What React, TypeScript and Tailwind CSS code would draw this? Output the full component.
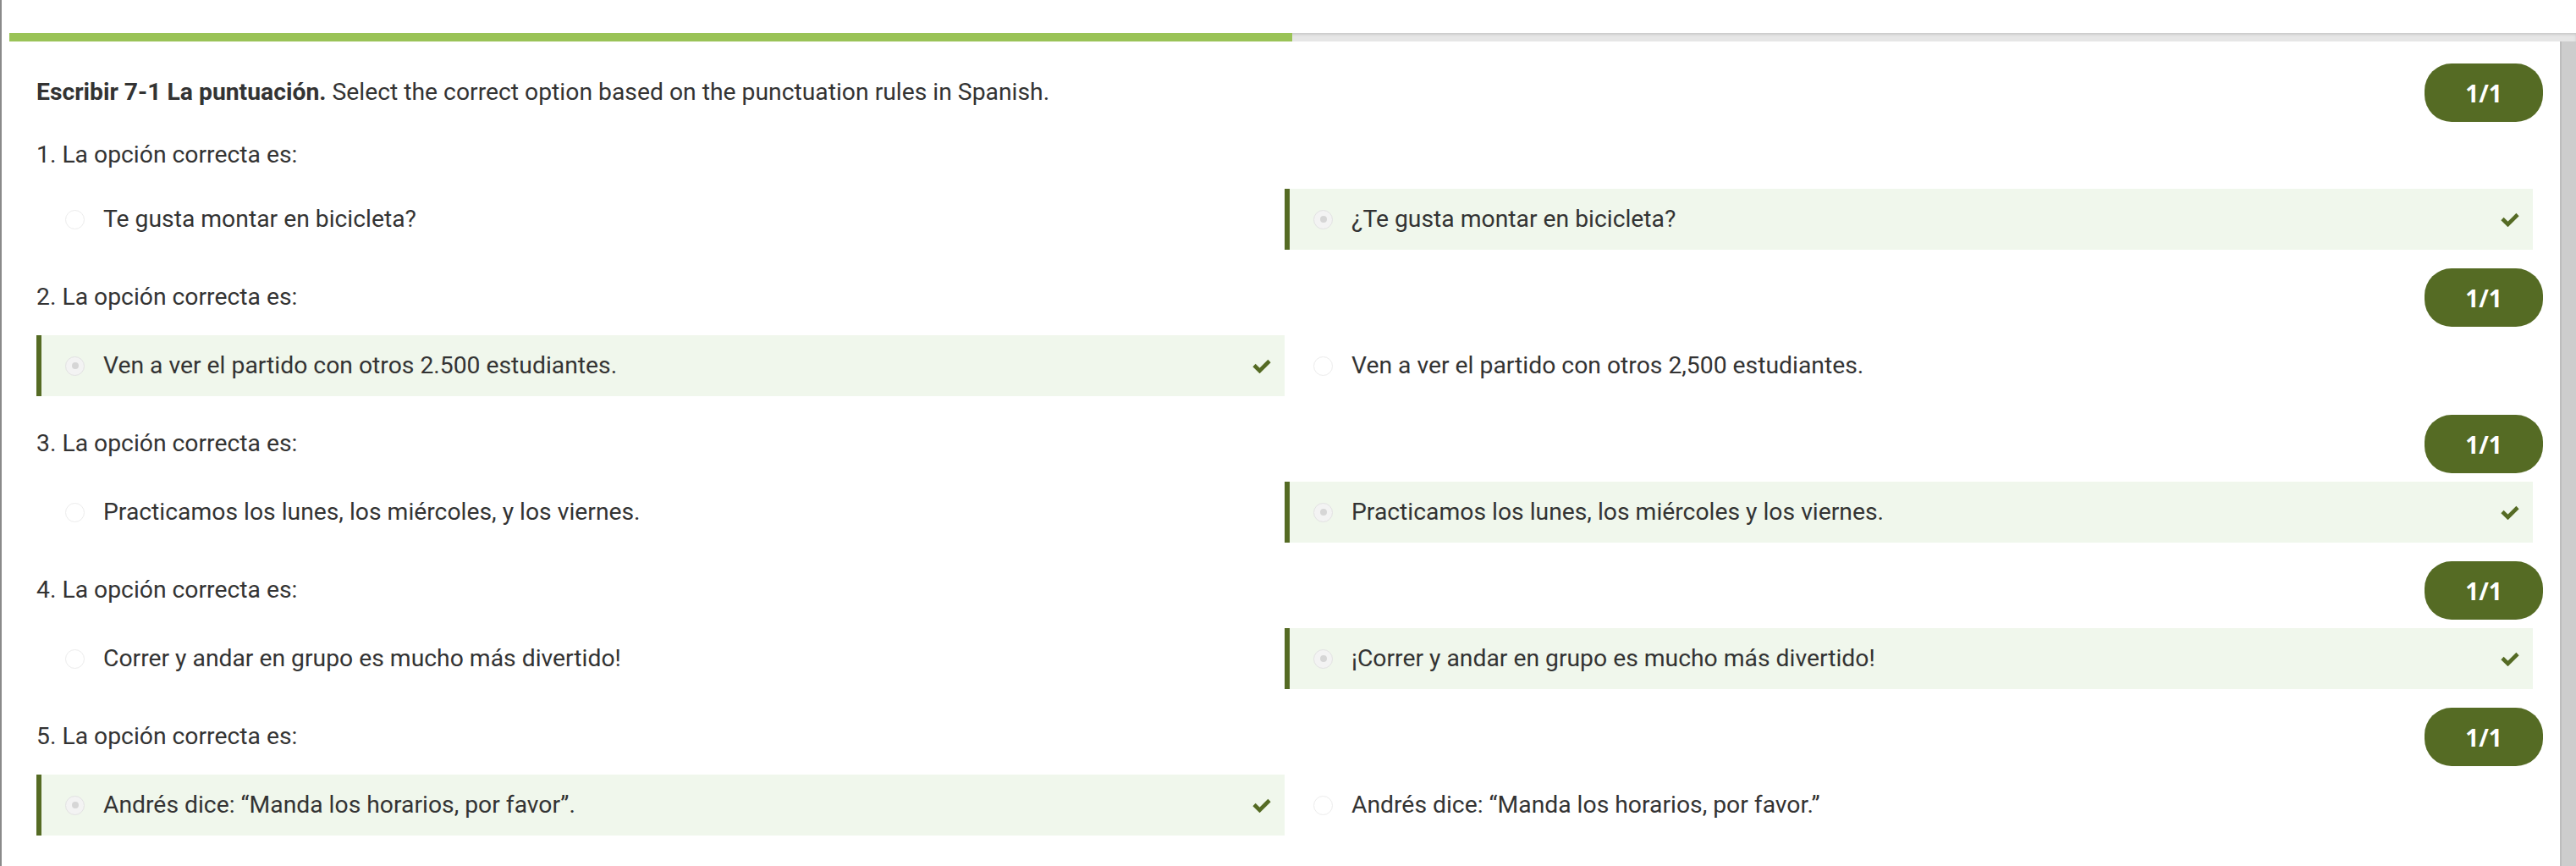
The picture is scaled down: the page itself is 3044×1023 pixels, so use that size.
import React from 'react';

interface Question {
  options: [string, string];
  correct: 0 | 1;
}

const questions: Question[] = [
  { options: ['Te gusta montar en bicicleta?', '¿Te gusta montar en bicicleta?'], correct: 1 },
  {
    options: [
      'Ven a ver el partido con otros 2.500 estudiantes.',
      'Ven a ver el partido con otros 2,500 estudiantes.',
    ],
    correct: 0,
  },
  {
    options: [
      'Practicamos los lunes, los miércoles, y los viernes.',
      'Practicamos los lunes, los miércoles y los viernes.',
    ],
    correct: 1,
  },
  {
    options: [
      'Correr y andar en grupo es mucho más divertido!',
      '¡Correr y andar en grupo es mucho más divertido!',
    ],
    correct: 1,
  },
  {
    options: ['Andrés dice: “Manda los horarios, por favor”.', 'Andrés dice: “Manda los horarios, por favor.”'],
    correct: 0,
  },
];

const Check = () => (
  <svg width="22" height="18" viewBox="0 0 22 18" className="shrink-0">
    <polyline points="2,8.5 8.5,15 20,3.5" fill="none" stroke="#556b24" strokeWidth="4.6" />
  </svg>
);

const Radio: React.FC<{ checked: boolean }> = ({ checked }) => (
  <div
    className={
      checked
        ? 'w-[23px] h-[23px] shrink-0 rounded-full border border-[#e2e2e2] bg-[#f3f3f3] flex items-center justify-center'
        : 'w-[23px] h-[23px] shrink-0 rounded-full border border-[#ececec] bg-white'
    }
  >
    {checked && <div className="w-[8px] h-[8px] rounded-full bg-[#d6d6d6]" />}
  </div>
);

const Option: React.FC<{ text: string; selected: boolean }> = ({ text, selected }) => (
  <div
    className={
      selected
        ? 'h-[72px] flex items-center border-l-[6px] border-[#556b24] bg-[#f0f7ec] pl-[28px] pr-[16px]'
        : 'h-[72px] flex items-center border-l-[6px] border-transparent pl-[28px] pr-[16px]'
    }
  >
    <Radio checked={selected} />
    <span className="ml-[22px] flex-1 text-[28.3px] leading-none text-[#333333]">{text}</span>
    {selected && <Check />}
  </div>
);

const Badge = () => (
  <div className="w-[140px] h-[69px] shrink-0 rounded-[32px] bg-[#556b24] flex items-center justify-center text-white font-bold text-[28px] leading-none [font-family:'Open_Sans',sans-serif]">
    1/1
  </div>
);

export default function App() {
  return (
    <div className="w-[3044px] h-[1023px] overflow-hidden bg-white flex [font-family:Roboto,'Liberation_Sans',sans-serif]">
      <div className="w-[2px] shrink-0 bg-[#8a8a8a]" />
      <div className="flex-1 flex flex-col min-w-0">
        <div className="h-[39px] shrink-0" />
        <div className="h-[10px] shrink-0 ml-[9px] flex bg-[#e6e6e6] shadow-[inset_0_2px_3px_rgba(0,0,0,0.12)]">
          <div className="w-[1516px] bg-[#9ac357]" />
        </div>
        <div className="flex-1 flex min-h-0">
          <div className="flex-1 pl-[41px] pr-[20px]">
            <div className="mt-[26px] h-[69px] flex items-center justify-between">
              <p className="text-[28.3px] leading-none text-[#333333]">
                <span className="font-bold">Escribir 7-1 La puntuación.</span> Select the correct option based on
                the punctuation rules in Spanish.
              </p>
              <Badge />
            </div>

            {questions.map((q, i) => (
              <div key={i}>
                {i === 0 ? (
                  <div className="mt-[19px] h-[40px] flex items-center text-[28.3px] leading-none text-[#333333]">
                    1. La opción correcta es:
                  </div>
                ) : (
                  <div className="mt-[22px] h-[69px] flex items-center justify-between">
                    <span className="text-[28.3px] leading-none text-[#333333]">{i + 1}. La opción correcta es:</span>
                    <Badge />
                  </div>
                )}
                <div className={i === 0 ? 'mt-[20px] mr-[12px] grid grid-cols-2' : 'mt-[10px] mr-[12px] grid grid-cols-2'}>
                  <Option text={q.options[0]} selected={q.correct === 0} />
                  <Option text={q.options[1]} selected={q.correct === 1} />
                </div>
              </div>
            ))}
          </div>
          <div className="w-[19px] shrink-0 bg-[#cdcdcd] border-l-2 border-[#bdbdbd]" />
        </div>
      </div>
    </div>
  );
}
